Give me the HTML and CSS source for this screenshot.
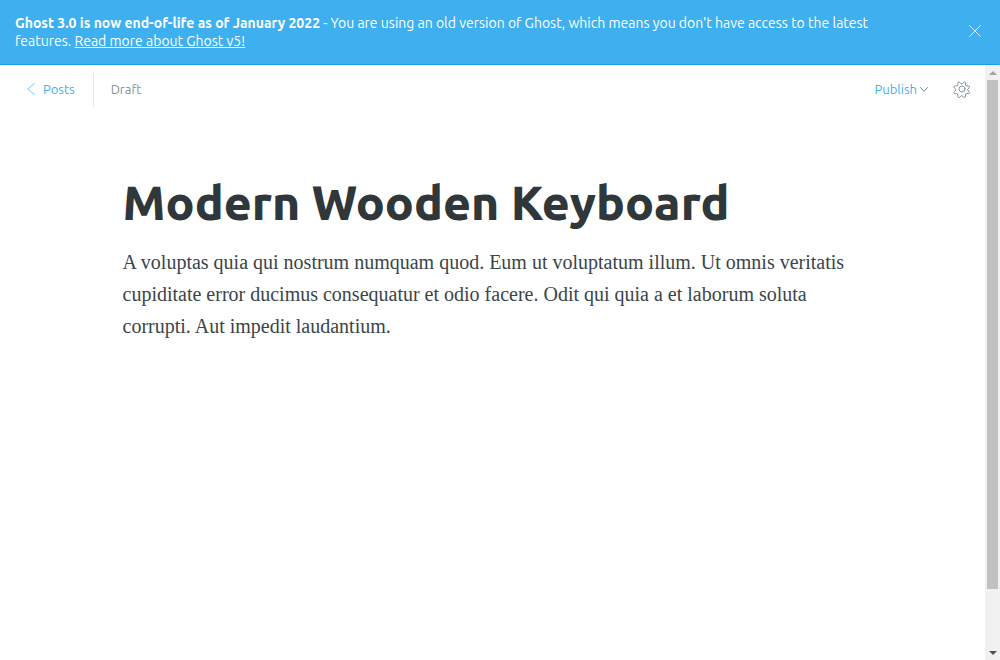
FILE: index.html
```html
<!DOCTYPE html>
<html lang="en">
<head>
<meta charset="utf-8">
<meta name="viewport" content="width=device-width, initial-scale=1">
<title>Modern Wooden Keyboard</title>
<link rel="stylesheet" href="styles.css">
</head>
<body>
<div class="app">
  <aside class="alert">
    <p class="alert-text"><strong>Ghost 3.0 is now end-of-life as of January 2022</strong> - You are using an old version of Ghost, which means you don't have access to the latest features. <a class="alert-link" href="#">Read more about Ghost v5!</a></p>
    <button class="icon-button" type="button" aria-label="Close">
      <svg width="12" height="12" viewBox="0 0 12 12" fill="none" stroke="currentColor" stroke-width="0.8" stroke-linecap="round"><path d="M.5.5l11 11M11.5.5l-11 11"/></svg>
    </button>
  </aside>
  <div class="viewport">
    <main class="page">
      <header class="toolbar">
        <a class="back" href="#">
          <svg width="8" height="12" viewBox="0 0 8 12" fill="none" stroke="currentColor" stroke-width="0.7" stroke-linecap="round" stroke-linejoin="round"><path d="M7.5.5L.8 6l6.7 5.5"/></svg>
          Posts
        </a>
        <span class="status">Draft</span>
        <button class="publish" type="button">
          Publish
          <svg width="8" height="5" viewBox="0 0 8 5" fill="none" stroke="#738a94" stroke-width="1" stroke-linecap="round" stroke-linejoin="round"><path d="M.5.5L4 4.3 7.5.5"/></svg>
        </button>
        <button class="icon-button settings" type="button" aria-label="Settings">
          <svg width="18" height="18" viewBox="-1.5 -1.5 27 27" fill="none" stroke="currentColor" stroke-width="1.3" stroke-linecap="round" stroke-linejoin="round"><circle cx="12" cy="12" r="4.500"/><path d="M13.730 2.100l.510 1.670a2.080 2.080 0 0 0 2.890 1.200l1.550-.810a1.790 1.790 0 0 1 2.420 2.420l-.810 1.550a2.080 2.080 0 0 0 1.200 2.890l1.670.510a1.790 1.790 0 0 1 0 3.440l-1.670.510a2.080 2.080 0 0 0-1.200 2.890l.810 1.550a1.790 1.790 0 0 1-2.420 2.420l-1.550-.810a2.080 2.080 0 0 0-2.890 1.200l-.510 1.670a1.790 1.790 0 0 1-3.440 0l-.510-1.670a2.080 2.080 0 0 0-2.890-1.200l-1.550.810a1.790 1.790 0 0 1-2.420-2.420l.810-1.550a2.080 2.080 0 0 0-1.200-2.890l-1.670-.510a1.790 1.790 0 0 1 0-3.440l1.670-.510a2.080 2.080 0 0 0 1.200-2.890l-.810-1.550a1.790 1.790 0 0 1 2.420-2.420l1.550.810a2.080 2.080 0 0 0 2.890-1.200l.510-1.670a1.790 1.790 0 0 1 3.440 0z" transform="rotate(22.500 12 12)"/></svg>
        </button>
      </header>
      <section class="editor">
        <input class="title" type="text" aria-label="Post title" value="Modern Wooden Keyboard">
        <p class="body-text">A voluptas quia qui nostrum numquam quod. Eum ut voluptatum illum. Ut omnis veritatis cupiditate error ducimus consequatur et odio facere. Odit qui quia a et laborum soluta corrupti. Aut impedit laudantium.</p>
      </section>
    </main>
    <div class="scrollbar" aria-hidden="true">
      <span class="arrow up"></span>
      <div class="track"><div class="thumb"></div></div>
      <span class="arrow down"></span>
    </div>
  </div>
</div>
</body>
</html>
```
FILE: styles.css
```css
* {
  box-sizing: border-box;
}

body {
  margin: 0;
  background: #fff;
  color: #2f373b;
  font-family: Ubuntu, "Open Sans", sans-serif;
  font-size: 13px;
}

button {
  padding: 0;
  border: 0;
  background: none;
  font: inherit;
}

svg {
  display: block;
}

.app {
  display: flex;
  flex-direction: column;
  height: 100vh;
}

.alert {
  display: flex;
  align-items: flex-start;
  justify-content: space-between;
  gap: 40px;
  padding: 14px 15px;
  border-bottom: 1px solid #15a0ee;
  background: #3eb0ef;
  color: #fff;
}

.alert-text {
  margin: 0;
  font-size: 14px;
  line-height: 18px;
}

.alert-link {
  color: inherit;
}

.icon-button {
  flex: none;
  color: inherit;
}

.alert .icon-button {
  padding: 11px 4px;
}

.viewport {
  display: flex;
  flex: 1;
  min-height: 0;
}

.page {
  flex: 1;
  min-width: 0;
  overflow: hidden;
}

.toolbar {
  display: flex;
  align-items: center;
  height: 48px;
  padding: 0 14px 0 27px;
}

.back {
  display: flex;
  align-items: center;
  gap: 8px;
  height: 36px;
  padding-right: 18px;
  border-right: 1px solid #e3ebf2;
  color: #3eb0ef;
  text-decoration: none;
}

.status {
  margin-right: auto;
  padding-left: 17px;
  color: #8395a0;
}

.publish {
  display: flex;
  align-items: center;
  gap: 3px;
  color: #3eb0ef;
}

.icon-button.settings {
  margin-left: 25px;
  color: #738a94;
}

.editor {
  max-width: 740px;
  margin: 0 auto;
  padding-top: 61px;
}

.title {
  display: block;
  width: 100%;
  padding: 0;
  border: 0;
  outline: 0;
  background: none;
  color: #2f373b;
  font-family: inherit;
  font-size: 48px;
  font-weight: 800;
  line-height: 56px;
}

.body-text {
  margin: 16px 0 0;
  color: #3a454b;
  font-family: "Liberation Serif", serif;
  font-size: 20px;
  line-height: 32px;
}

.scrollbar {
  display: flex;
  flex: none;
  flex-direction: column;
  align-items: center;
  width: 15px;
  background: #f1f1f1;
}

.arrow {
  height: 15px;
  padding: 6px 0;
}

.arrow::before {
  display: block;
  border: 4px solid transparent;
  content: "";
}

.up::before {
  border-top: 0;
  border-bottom-color: #a3a3a3;
}

.down::before {
  border-bottom: 0;
  border-top-color: #505050;
}

.track {
  flex: 1;
  width: 11px;
}

.thumb {
  height: 90%;
  background: #c1c1c1;
}
```
